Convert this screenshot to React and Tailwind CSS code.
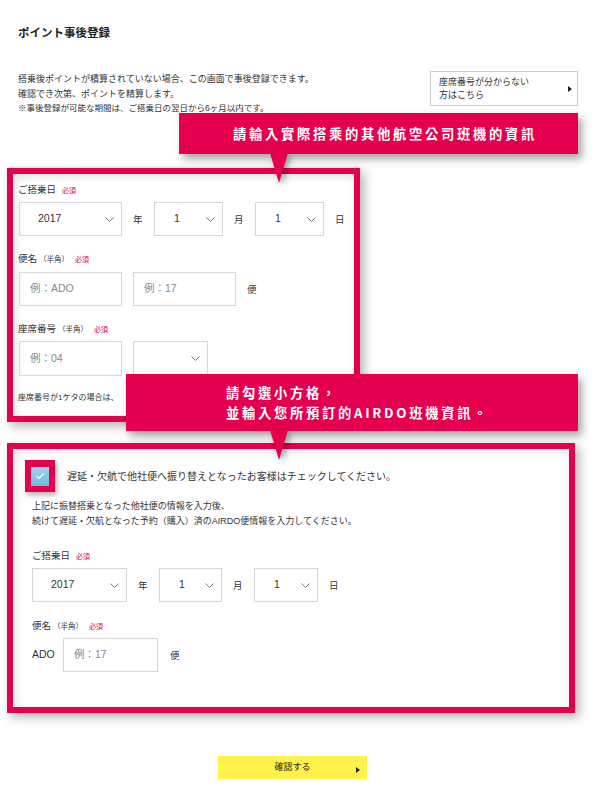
import React from 'react';

const RED = 'bg-[#e4004f]';

const Chevron = () => (
  <svg width="9" height="5" viewBox="0 0 9 5" className="shrink-0">
    <polyline points="0.5,0.5 4.5,4.5 8.5,0.5" fill="none" stroke="#777" strokeWidth="1" />
  </svg>
);

const Arrow = () => (
  <span className="inline-block w-0 h-0 border-y-[3px] border-y-transparent border-l-[4px] border-l-[#222]" />
);

const Label = ({ main, sub }) => (
  <div className="flex items-baseline h-[14px] text-[9.5px] leading-[14px] text-[#333]">
    <span>{main}</span>
    {sub && <span className="ml-[2px] text-[7.5px]">{sub}</span>}
    <span className="ml-[6px] text-[7px] text-[#e4004f]">必須</span>
  </div>
);

const Select = ({ className, value, pad }) => (
  <div className={`h-full border border-[#d6d6d6] flex items-center justify-between pr-[7px] text-[10.5px] text-[#333] ${pad} ${className}`}>
    <span>{value}</span>
    <Chevron />
  </div>
);

const Input = ({ className, placeholder }) => (
  <div className={`h-full border border-[#d6d6d6] flex items-center pl-[10px] text-[10.5px] text-[#888] ${className}`}>
    {placeholder}
  </div>
);

const Unit = ({ children }) => <span className="w-[10px] text-[9.5px] text-[#333] mt-[3px]">{children}</span>;

const Pointer = ({ className }) => (
  <svg width="18" height="30" viewBox="0 0 18 30" className={`absolute drop-shadow-[3px_3px_3px_rgba(0,0,0,0.35)] ${className}`}>
    <polygon points="0,0 18,0 9,30" fill="#e4004f" />
  </svg>
);

const App = () => {
  return (
    <div className="relative w-[600px] h-[792px] overflow-hidden bg-white text-[#333] font-['Liberation_Sans','Noto_Sans_CJK_JP',sans-serif]">
      {/* page title */}
      <h1 className="pt-[25px] pl-[18px] text-[11.5px] leading-[16px] font-bold text-[#222]">ポイント事後登録</h1>

      {/* intro + link */}
      <div className="mt-[30px] h-[46px] flex justify-between">
        <div className="pl-[18px] pt-[1px] text-[9px] leading-[14.5px] text-[#333]">
          <p>搭乗後ポイントが積算されていない場合、この画面で事後登録できます。</p>
          <p>確認でき次第、ポイントを精算します。</p>
          <p className="text-[8.5px]">※事後登録が可能な期間は、ご搭乗日の翌日から6ヶ月以内です。</p>
        </div>
        <div className="mr-[22px] w-[148px] h-[35px] border border-[#ccc] flex items-center justify-between pl-[8px] pr-[5px] text-[9px] leading-[13px] text-[#333]">
          <div>
            座席番号が分からない
            <br />
            方はこちら
          </div>
          <Arrow />
        </div>
      </div>

      {/* section 1 */}
      <section className="ml-[7px] mt-[51px] w-[353px] h-[254px] border-[6px] border-[#e4004f] pl-[5px] pt-[9px] shadow-[4px_4px_10px_rgba(0,0,0,0.3),inset_3px_3px_8px_rgba(0,0,0,0.12)]">
        <Label main="ご搭乗日" />
        <div className="mt-[5px] ml-[1px] h-[34px] flex items-center gap-[11px]">
          <Select className="w-[103px]" pad="pl-[18px]" value="2017" />
          <Unit>年</Unit>
          <Select className="w-[69px]" pad="pl-[19px]" value="1" />
          <Unit>月</Unit>
          <Select className="w-[69px]" pad="pl-[19px]" value="1" />
          <Unit>日</Unit>
        </div>

        <div className="mt-[16px]">
          <Label main="便名" sub="（半角）" />
        </div>
        <div className="mt-[6px] ml-[1px] h-[34px] flex items-center gap-[11px]">
          <Input className="w-[103px]" placeholder="例：ADO" />
          <Input className="w-[103px]" placeholder="例：17" />
          <Unit>便</Unit>
        </div>

        <div className="mt-[16px]">
          <Label main="座席番号" sub="（半角）" />
        </div>
        <div className="mt-[5px] ml-[1px] h-[35px] flex items-center gap-[11px]">
          <Input className="w-[103px]" placeholder="例：04" />
          <Select className="w-[75px]" pad="pl-[18px]" value="" />
        </div>

        <p className="mt-[16px] text-[8px] leading-[12px] text-[#333]">座席番号が1ケタの場合は、</p>
      </section>

      {/* section 2 */}
      <section className="ml-[7px] mt-[21px] w-[568px] h-[270px] border-[6px] border-[#e4004f] shadow-[4px_4px_10px_rgba(0,0,0,0.3),inset_3px_3px_8px_rgba(0,0,0,0.12)]">
        <div className="mt-[11px] ml-[12px] flex items-center">
          <div className={`w-[30px] h-[32px] ${RED} flex items-center justify-center shadow-[2px_3px_5px_rgba(0,0,0,0.3)]`}>
            <div className="w-[18px] h-[19px] bg-linear-to-b from-[#9dd5ef] to-[#6cbbe2] flex items-center justify-center">
              <svg width="10" height="8" viewBox="0 0 10 8">
                <polyline points="1.5,4 4,6.5 8.5,1.5" fill="none" stroke="white" strokeWidth="1.2" />
              </svg>
            </div>
          </div>
          <span className="ml-[12px] text-[10px] text-[#333]">遅延・欠航で他社便へ振り替えとなったお客様はチェックしてください。</span>
        </div>

        <div className="mt-[7px] ml-[19px] text-[9px] leading-[15px] text-[#333]">
          <p>上記に振替搭乗となった他社便の情報を入力後、</p>
          <p>続けて遅延・欠航となった予約（購入）済のAIRDO便情報を入力してください。</p>
        </div>

        <div className="mt-[20px] ml-[19px]">
          <Label main="ご搭乗日" />
          <div className="mt-[5px] h-[34px] flex items-center gap-[11px]">
            <Select className="w-[95px]" pad="pl-[18px]" value="2017" />
            <Unit>年</Unit>
            <Select className="w-[63px]" pad="pl-[19px]" value="1" />
            <Unit>月</Unit>
            <Select className="w-[64px]" pad="pl-[19px]" value="1" />
            <Unit>日</Unit>
          </div>

          <div className="mt-[17px]">
            <Label main="便名" sub="（半角）" />
          </div>
          <div className="mt-[5px] h-[34px] flex items-center">
            <span className="w-[31px] text-[10.5px] text-[#333]">ADO</span>
            <Input className="w-[95px]" placeholder="例：17" />
            <span className="ml-[12px] mt-[3px] text-[9.5px] text-[#333]">便</span>
          </div>
        </div>
      </section>

      {/* submit */}
      <div className="relative mt-[43px] ml-[218px] w-[149px] h-[23px] bg-[#fff24a] flex items-center justify-center text-[9px] text-[#222]">
        確認する
        <span className="absolute right-[7px] top-[8px]">
          <Arrow />
        </span>
      </div>

      {/* annotation callouts */}
      <div className={`absolute left-[179px] top-[113px] w-[399px] h-[41px] ${RED} shadow-[4px_5px_8px_rgba(0,0,0,0.35)] flex items-center pl-[54px] text-white font-bold text-[13.3px] tracking-[2.7px] font-['Noto_Sans_CJK_TC',sans-serif]`}>
        請輸入實際搭乘的其他航空公司班機的資訊
      </div>
      <Pointer className="left-[270px] top-[153px]" />

      <div className={`absolute left-[126px] top-[374px] w-[452px] h-[57px] ${RED} shadow-[4px_5px_8px_rgba(0,0,0,0.35)] flex flex-col justify-center pl-[100px] text-white font-bold text-[13.3px] leading-[20px] tracking-[2.7px] font-['Noto_Sans_CJK_TC',sans-serif]`}>
        <p>請勾選小方格，</p>
        <p>並輸入您所預訂的AIRDO班機資訊。</p>
      </div>
      <Pointer className="left-[270px] top-[430px]" />
    </div>
  );
};

export default App;
